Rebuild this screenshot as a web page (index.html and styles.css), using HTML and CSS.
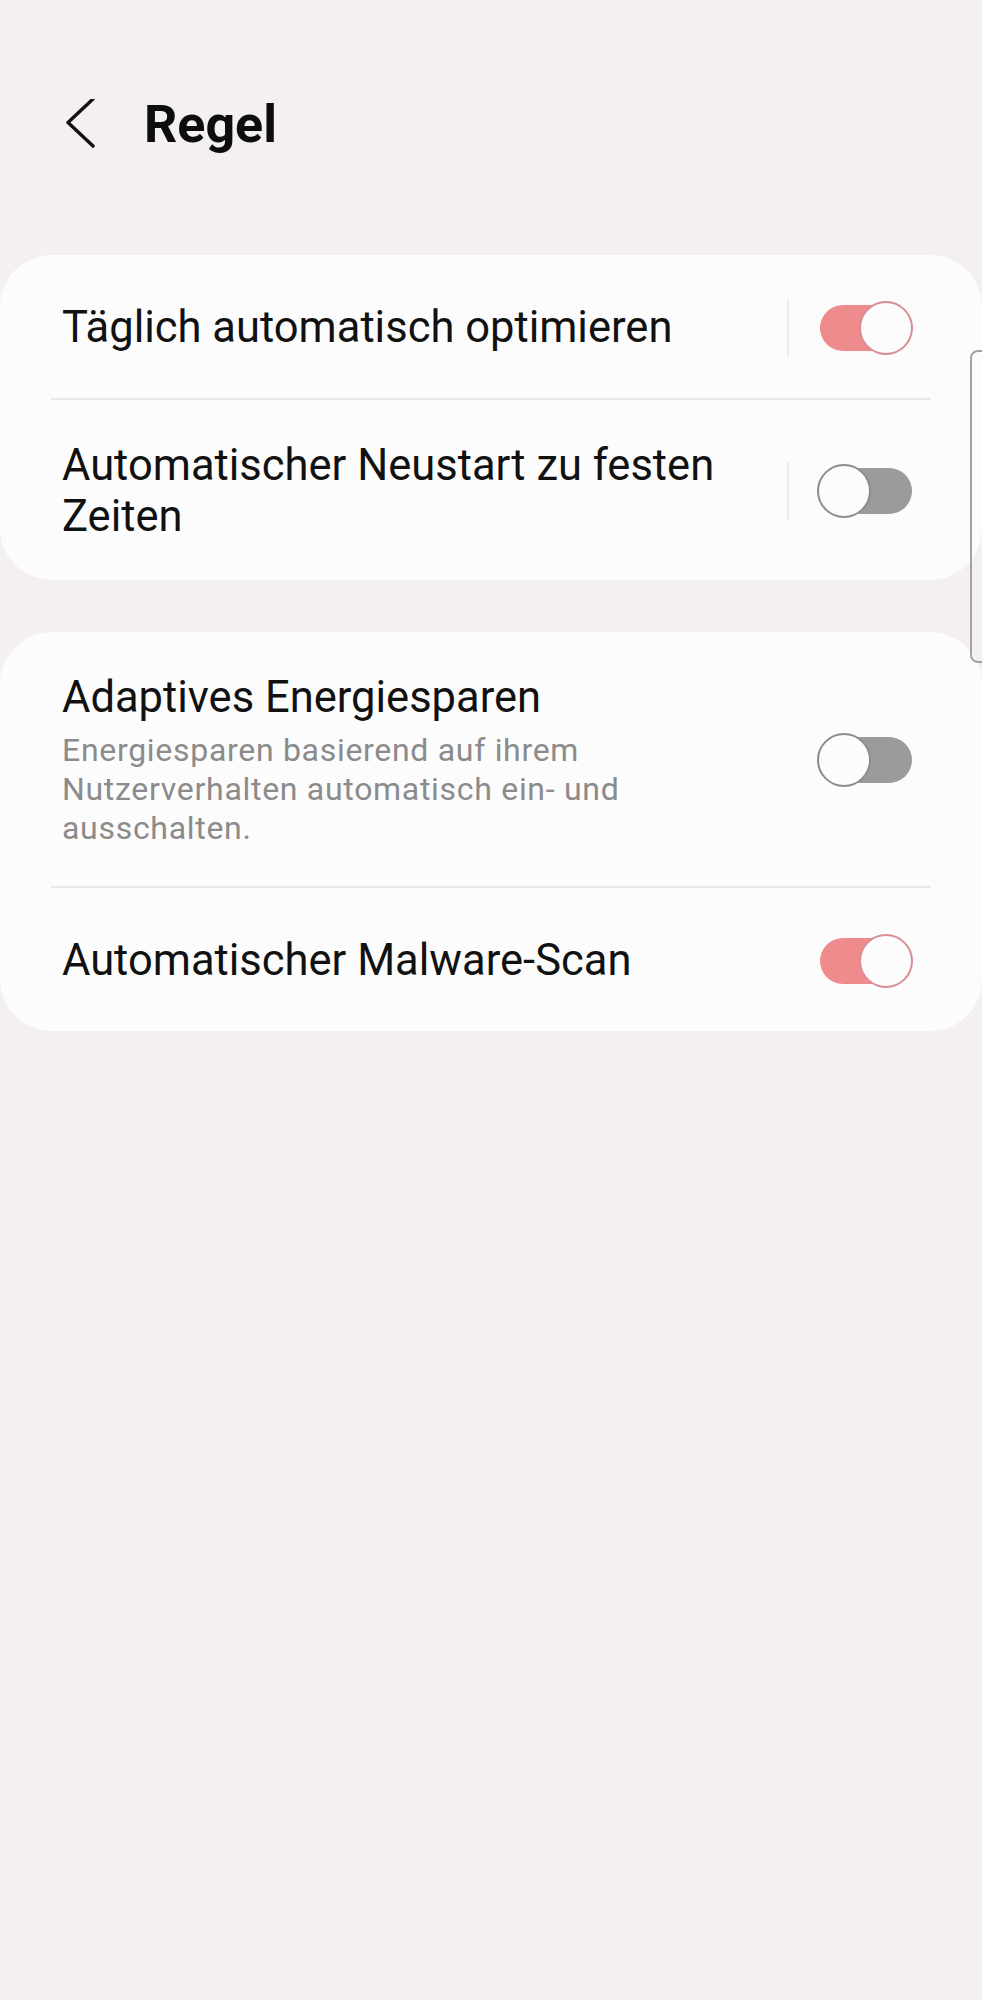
FILE: index.html
```html
<!DOCTYPE html>
<html lang="de">
<head>
  <meta charset="UTF-8" />
  <meta name="viewport" content="width=device-width, initial-scale=1.0"/>
  <title>Regel</title>
  <link rel="stylesheet" href="styles.css">
</head>
<body>

  <div class="header">
    <svg class="back" width="40" height="52" viewBox="0 0 40 52">
      <path d="M33 0 L8 23.5 L33 47" fill="none" stroke="#111" stroke-width="3.4" stroke-linecap="round" stroke-linejoin="round"/>
    </svg>
    <h1 class="title">Regel</h1>
  </div>

  <div class="card">
    <div class="row">
      <div class="row-text">
        <div class="label">Täglich automatisch optimieren</div>
      </div>
      <span class="sep"></span>
      <span class="toggle on"></span>
    </div>
    <div class="divider"></div>
    <div class="row">
      <div class="row-text">
        <div class="label">Automatischer Neustart zu festen Zeiten</div>
      </div>
      <span class="sep"></span>
      <span class="toggle"></span>
    </div>
  </div>

  <div class="card">
    <div class="row">
      <div class="row-text">
        <div class="label">Adaptives Energiesparen</div>
        <div class="sub">Energiesparen basierend auf ihrem Nutzerverhalten automatisch ein- und ausschalten.</div>
      </div>
      <span class="toggle"></span>
    </div>
    <div class="divider"></div>
    <div class="row">
      <div class="row-text">
        <div class="label">Automatischer Malware-Scan</div>
      </div>
      <span class="toggle on"></span>
    </div>
  </div>

  <!-- edge panel handle -->
  <div class="edge-handle"></div>

</body>
</html>
```

FILE: styles.css
```css
body {
  margin: 0;
  background: #f4eff1;
  font-family: Roboto, "Noto Sans", sans-serif;
  color: #111;
  position: relative;
  min-height: 2000px;
}

.header {
  display: flex;
  align-items: center;
  padding: 99px 0 0 60px;
  height: 52px;
  margin-bottom: 104px;
}

.back {
  display: block;
  margin-right: 44px;
}

.title {
  margin: 0;
  font-size: 52px;
  line-height: 52px;
  font-weight: 700;
  color: #0d0d0d;
}

.card {
  background: #fcfcfc;
  border-radius: 52px;
  margin-bottom: 52px;
}

.row {
  display: flex;
  align-items: center;
  box-sizing: border-box;
  min-height: 143px;
  padding: 40px 69px 38px 62px;
}

.row-text {
  flex: 1;
  margin-right: 40px;
}

.label {
  font-size: 43.5px;
  line-height: 51px;
  color: #111;
}

.sub {
  max-width: 610px;
  margin-top: 8px;
  font-size: 32px;
  line-height: 39px;
  letter-spacing: 0.7px;
  color: #8b8b8b;
}

.sep {
  width: 2px;
  height: 58px;
  background: #ececec;
  margin-right: 28px;
}

.divider {
  height: 2px;
  margin: 0 51px;
  background: #e8e8e8;
}

.toggle {
  position: relative;
  flex: none;
  width: 92px;
  height: 46px;
  border-radius: 23px;
  background: #9b9b9b;
  margin-left: 3px;
  margin-right: 1px;
}

.toggle::after {
  content: "";
  position: absolute;
  top: -4px;
  left: -3px;
  width: 54px;
  height: 54px;
  box-sizing: border-box;
  border: 2px solid #8c8c8c;
  border-radius: 50%;
  background: #fcfcfc;
}

.toggle.on {
  background: #f08b8d;
}

.toggle.on::after {
  left: auto;
  right: -1px;
  border-color: #d88d94;
}

.edge-handle {
  position: absolute;
  left: 970px;
  top: 350px;
  width: 20px;
  height: 313px;
  box-sizing: border-box;
  border: 2px solid #a3a3a3;
  border-radius: 8px;
}
```
